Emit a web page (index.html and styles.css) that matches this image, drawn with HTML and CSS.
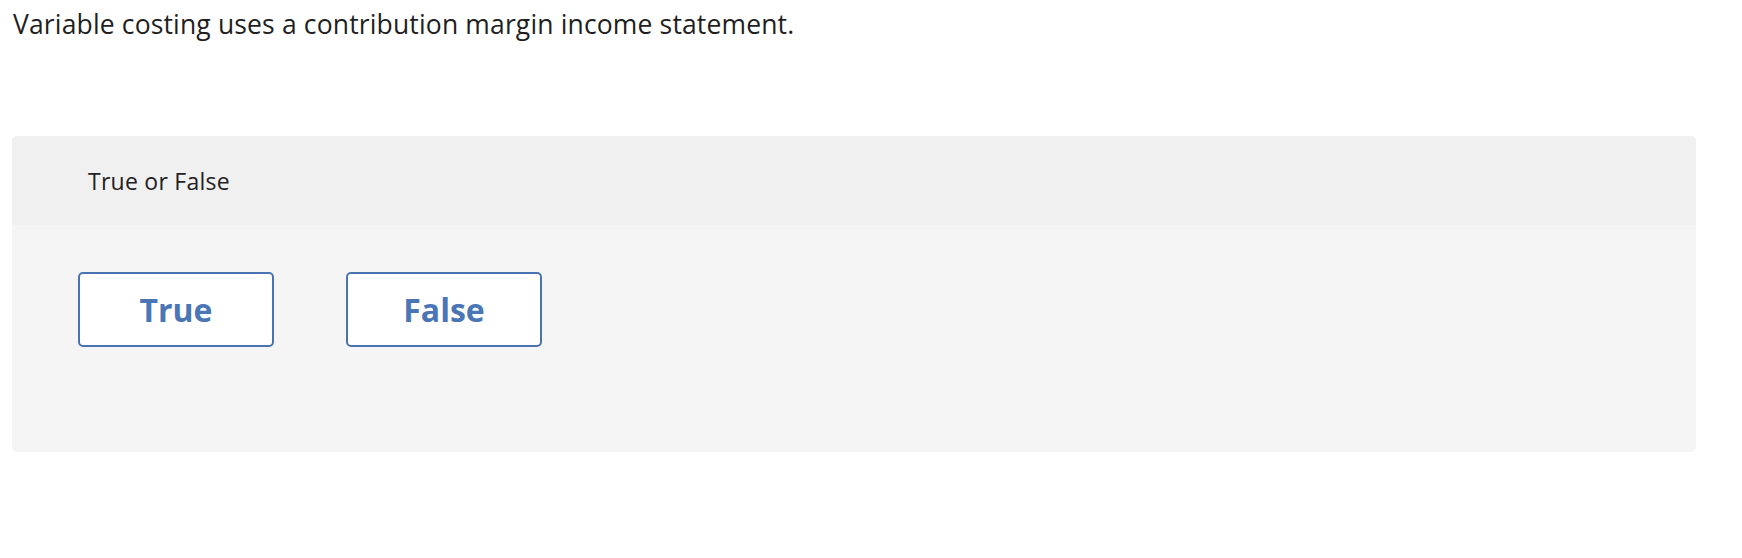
FILE: index.html
```html
<!DOCTYPE html>
<html lang="en">
<head>
<meta charset="utf-8">
<title>True or False</title>
<link rel="stylesheet" href="styles.css">
</head>
<body>
<main class="page">
  <p class="question">Variable costing uses a contribution margin income statement.</p>
  <section class="card">
    <div class="card-head">True or False</div>
    <div class="card-body">
      <button class="choice" type="button">True</button>
      <button class="choice" type="button">False</button>
    </div>
  </section>
</main>
</body>
</html>
```

FILE: styles.css
```css
html, body {
  margin: 0;
  padding: 0;
  background: #ffffff;
}

.page {
  padding: 0 46px 0 12px;
  font-family: "Open Sans", "Liberation Sans", sans-serif;
  color: #222222;
}

.question {
  margin: 0;
  padding: 7px 0 0 1px;
  font-size: 26.5px;
  line-height: 34px;
  letter-spacing: 0.15px;
  color: #1f1f1f;
}

.card {
  margin-top: 95px;
  border-radius: 5px;
  overflow: hidden;
  background: #f5f5f5;
}

.card-head {
  height: 89px;
  display: flex;
  align-items: center;
  padding-left: 76px;
  background: #f0f0f0;
  font-size: 23px;
  letter-spacing: 0.25px;
  color: #222222;
}

.card-body {
  height: 227px;
  box-sizing: border-box;
  padding: 47px 66px;
  display: flex;
  align-items: flex-start;
  gap: 72px;
  background: #f5f5f5;
}

.choice {
  width: 196px;
  height: 75px;
  box-sizing: border-box;
  background: #ffffff;
  border: 2px solid #4a74b1;
  border-radius: 5px;
  color: #4a76b5;
  font-family: "Open Sans", "Liberation Sans", sans-serif;
  font-weight: 700;
  font-size: 32px;
  padding: 0;
  cursor: pointer;
}
```
